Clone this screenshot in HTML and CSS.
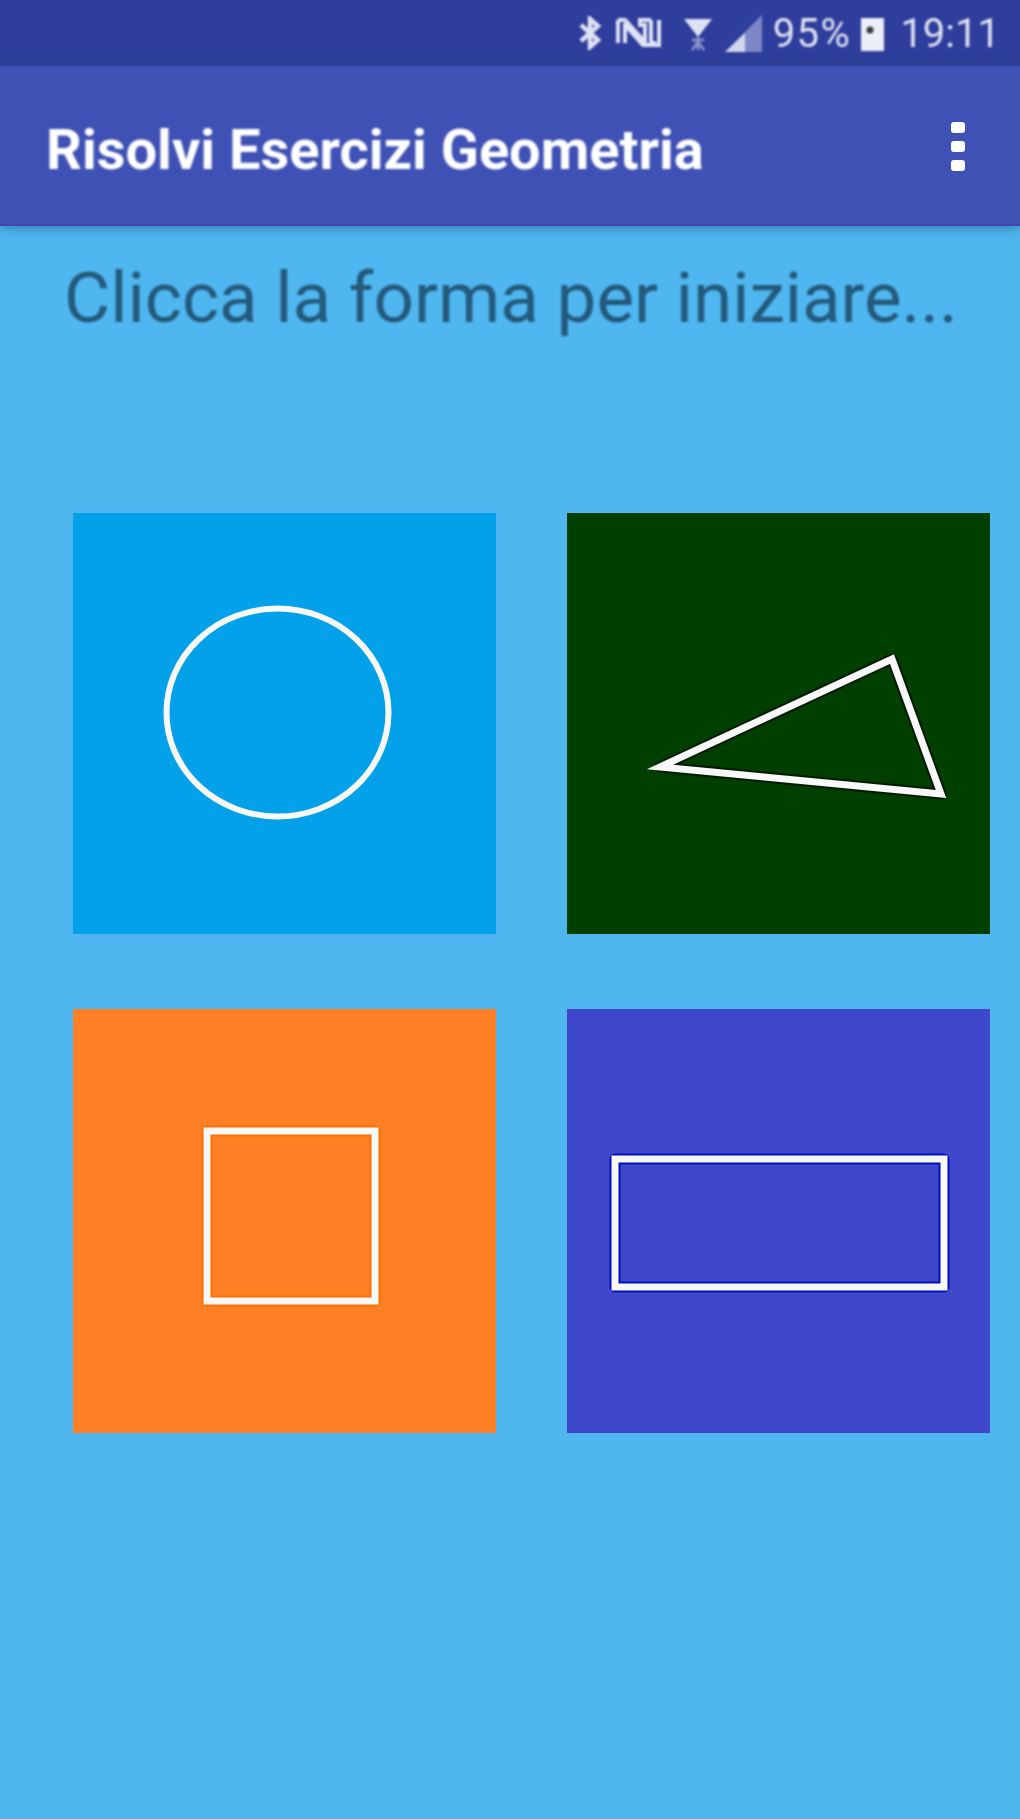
FILE: index.html
```html
<!DOCTYPE html>
<html lang="it">
<head>
<meta charset="utf-8">
<title>Risolvi Esercizi Geometria</title>
<link rel="stylesheet" href="styles.css">
</head>
<body>
<div class="screen">
  <header class="status">
    <svg class="ico ico-bt" viewBox="0 0 26 34"><path d="M4 9 L21 24 L13 31 V3 L21 10 L4 25" fill="none" stroke="#dfe2f3" stroke-width="4.500"/></svg>
    <svg class="ico ico-nfc" viewBox="0 0 48 32"><path d="M3 3 H10 L30 25 V8 H25 V3 H36 M3 3 V26 M10 6 V26 M36 3 V26 H41 M44 3 V28 H28 L10 8" fill="none" stroke="#dfe2f3" stroke-width="4"/></svg>
    <svg class="ico ico-wifi" viewBox="0 0 30 35"><path d="M1 3 H29 L15 21 Z" fill="#dfe2f3"/><path d="M9 24 H21 M15 21 V34 M9 34 L15 26 L21 34" fill="none" stroke="#8f98cf" stroke-width="2.500"/></svg>
    <svg class="ico ico-signal" viewBox="0 0 37 37"><path d="M37 0 V37 H0 Z" fill="#7d87c8"/><path d="M20 18 V37 H0 Z" fill="#d3d7ee"/></svg>
    <span class="pct">95%</span>
    <svg class="ico ico-batt" viewBox="0 0 25 35"><rect x="1" y="2" width="23" height="33" fill="#eceef8"/><circle cx="10" cy="14" r="3.500" fill="#34383f"/></svg>
    <span class="clock">19:11</span>
  </header>
  <div class="appbar">
    <h1 class="title">Risolvi Esercizi Geometria</h1>
    <div class="kebab"><i></i><i></i><i></i></div>
  </div>
  <main class="content">
    <p class="hint">Clicca la forma per iniziare...</p>
    <div class="grid">
      <svg class="tile tile-circle" viewBox="0 0 423 421"><ellipse cx="204.500" cy="199.500" rx="111" ry="104" class="shape"/></svg>
      <svg class="tile tile-triangle" viewBox="0 0 423 421"><path d="M93 254 L325 146 L374 281 Z" class="halo halo-dark"/><path d="M93 254 L325 146 L374 281 Z" class="shape shape-tri"/></svg>
      <svg class="tile tile-square" viewBox="0 0 423 424"><rect x="134" y="122" width="168" height="170" class="halo halo-orange"/><rect x="134" y="122" width="168" height="170" class="shape shape-thick"/></svg>
      <svg class="tile tile-rect" viewBox="0 0 423 424"><rect x="48" y="150" width="329" height="128" class="halo halo-blue"/><rect x="48" y="150" width="329" height="128" class="shape shape-thick"/></svg>
    </div>
  </main>
</div>
</body>
</html>
```

FILE: styles.css
```css
* { box-sizing: border-box; }
html, body { margin: 0; padding: 0; }
body { background: #4fb6f0; font-family: Roboto, "Liberation Sans", sans-serif; }
.screen { width: 1020px; height: 1819px; overflow: hidden; display: flex; flex-direction: column; background: #4fb6f0; }

.status { height: 66px; flex: none; background: #2f3e9c; display: flex; align-items: center; justify-content: flex-end; padding: 0 20px 0 0; color: #dfe2f3; font-size: 40px; }
.status > * { filter: blur(1.2px); }
.ico { display: block; flex: none; }
.ico-bt { width: 26px; height: 34px; margin-right: 12px; }
.ico-nfc { width: 48px; height: 32px; margin-right: 20px; }
.ico-wifi { width: 30px; height: 35px; margin-right: 12px; }
.ico-signal { width: 37px; height: 37px; margin-right: 11px; }
.pct { letter-spacing: 1.5px; margin-right: 9px; }
.ico-batt { width: 25px; height: 35px; margin-right: 15px; }
.clock { letter-spacing: 0; }

.appbar { height: 160px; flex: none; background: #3f51b5; border-bottom: 2px solid #4a41b5; box-shadow: 0 2px 10px rgba(30, 80, 110, 0.55); display: flex; align-items: center; justify-content: space-between; padding: 10px 55px 0 46px; position: relative; z-index: 1; }
.title { margin: 0; color: #fff; font-size: 56px; font-weight: 700; line-height: 60px; white-space: nowrap; filter: blur(0.8px); }
.kebab { display: flex; flex-direction: column; gap: 8px; margin-top: -8px; filter: blur(0.6px); }
.kebab i { display: block; width: 14px; height: 11px; border-radius: 3px; background: #fff; }

.content { flex: 1; padding: 30px 30px 0 73px; }
.hint { margin: 0 0 0 -9px; color: #245a7c; font-size: 71px; line-height: 84px; white-space: nowrap; filter: blur(0.8px); }
.grid { display: grid; grid-template-columns: 423px 423px; column-gap: 71px; row-gap: 75px; margin-top: 173px; }
.tile { display: block; width: 423px; height: 421px; filter: blur(0.7px); }
.tile-square, .tile-rect { height: 424px; }
.tile-circle { background: #03a1e9; }
.tile-triangle { background: #003f00; }
.tile-square { background: #ff7f24; }
.tile-rect { background: #3f48cb; }

.shape { fill: none; stroke: #f8f8f8; stroke-width: 6; stroke-linejoin: round; }
.shape-tri { stroke-width: 7; stroke-linejoin: miter; stroke-miterlimit: 8; }
.shape-thick { stroke-width: 7; stroke-linejoin: miter; }
.halo { fill: none; stroke-width: 11; stroke-linejoin: round; }
.halo-dark { stroke: #001a00; }
.halo-orange { stroke: #ff7000; }
.halo-blue { stroke: #0010c0; }
```
